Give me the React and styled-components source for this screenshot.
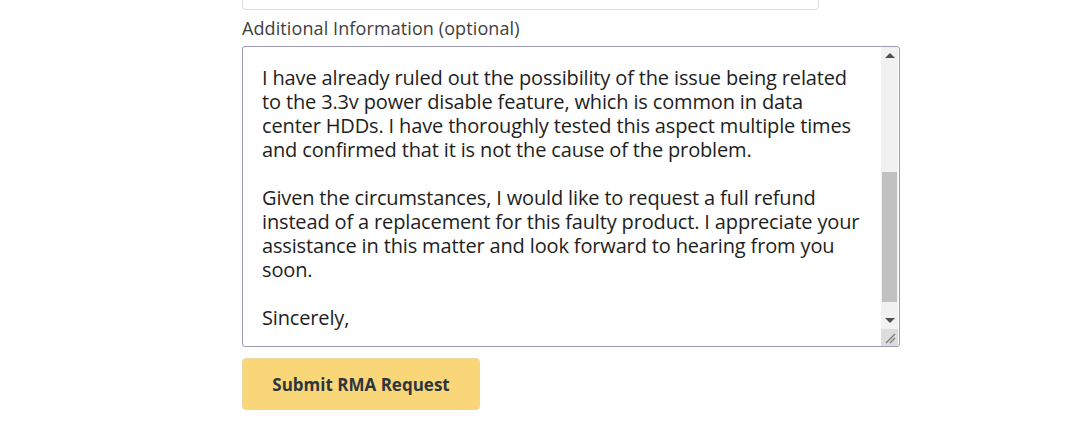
import styled, { createGlobalStyle } from "styled-components";

const GlobalStyle = createGlobalStyle`
  body {
    margin: 0;
    background: #fff;
    font-family: "Open Sans", "Noto Sans", sans-serif;
    overflow: hidden;
  }
`;

const message = [
  "I have already ruled out the possibility of the issue being related",
  "to the 3.3v power disable feature, which is common in data",
  "center HDDs. I have thoroughly tested this aspect multiple times",
  "and confirmed that it is not the cause of the problem.",
  "",
  "Given the circumstances, I would like to request a full refund",
  "instead of a replacement for this faulty product. I appreciate your",
  "assistance in this matter and look forward to hearing from you",
  "soon.",
  "",
  "Sincerely,",
];

export default function App() {
  return (
    <>
      <GlobalStyle />
      <Form>
        <TextInput />
        <Label>Additional Information (optional)</Label>
        <TextBox>
          <Content>
            {message.map((line, i) => (
              <Line key={i}>{line || "\u00a0"}</Line>
            ))}
          </Content>
          <Scrollbar>
            <ArrowButton>
              <Arrow $dir="up" />
            </ArrowButton>
            <Track>
              <Thumb $offset={108} $size={130} />
            </Track>
            <ArrowButton>
              <Arrow $dir="down" />
            </ArrowButton>
            <Resizer>
              <svg width="11" height="11" viewBox="0 0 11 11">
                <path d="M1 10 L10 1 M5 10 L10 5" stroke="#7a7a7a" strokeWidth="1.3" />
              </svg>
            </Resizer>
          </Scrollbar>
        </TextBox>
        <SubmitButton type="button">Submit RMA Request</SubmitButton>
      </Form>
    </>
  );
}

const Form = styled.div`
  display: flex;
  flex-direction: column;
  align-items: flex-start;
  margin-left: 242px;
  margin-top: -31px;
`;

const TextInput = styled.div`
  box-sizing: border-box;
  width: 577px;
  height: 41px;
  border: 1px solid #dcdce4;
  border-radius: 4px;
  background: #fff;
`;

const Label = styled.div`
  margin-top: 6px;
  height: 24px;
  line-height: 24px;
  font-size: 18px;
  color: #404040;
  letter-spacing: 0.1px;
`;

const TextBox = styled.div`
  box-sizing: border-box;
  margin-top: 6px;
  width: 658px;
  height: 301px;
  border: 1px solid #9d9bb1;
  border-radius: 3px;
  display: flex;
  overflow: hidden;
  background: #fff;
`;

const Content = styled.div`
  flex: 1;
  padding: 19px 0 0 19px;
  font-size: 20px;
  line-height: 24px;
  color: #1e1e1e;
  letter-spacing: -0.15px;
  overflow: hidden;
`;

const Line = styled.div`
  white-space: nowrap;
  height: 24px;
`;

const Scrollbar = styled.div`
  width: 17px;
  margin-right: 1px;
  display: flex;
  flex-direction: column;
  background: #f1f1f1;
`;

const ArrowButton = styled.div`
  height: 17px;
  display: flex;
  align-items: center;
  justify-content: center;
`;

const Arrow = styled.div`
  width: 0;
  height: 0;
  border-left: 5px solid transparent;
  border-right: 5px solid transparent;
  ${({ $dir }) =>
    $dir === "up"
      ? "border-bottom: 5px solid #505050;"
      : "border-top: 5px solid #505050;"}
`;

const Track = styled.div`
  flex: 1;
  position: relative;
`;

const Thumb = styled.div`
  position: absolute;
  left: 1px;
  right: 1px;
  top: ${({ $offset }) => $offset}px;
  height: ${({ $size }) => $size}px;
  background: #c1c1c1;
`;

const Resizer = styled.div`
  height: 17px;
  background: #dcdcdc;
  display: flex;
  align-items: flex-end;
  justify-content: flex-end;
  padding: 0 2px 2px 0;
  box-sizing: border-box;
`;

const SubmitButton = styled.button`
  margin-top: 11px;
  width: 238px;
  height: 52px;
  background: #f9d678;
  border: 1px solid #ecd6a0;
  border-radius: 4px;
  font-family: "Open Sans", "Noto Sans", sans-serif;
  font-size: 17px;
  font-weight: 700;
  color: #2c3540;
  cursor: pointer;
`;
